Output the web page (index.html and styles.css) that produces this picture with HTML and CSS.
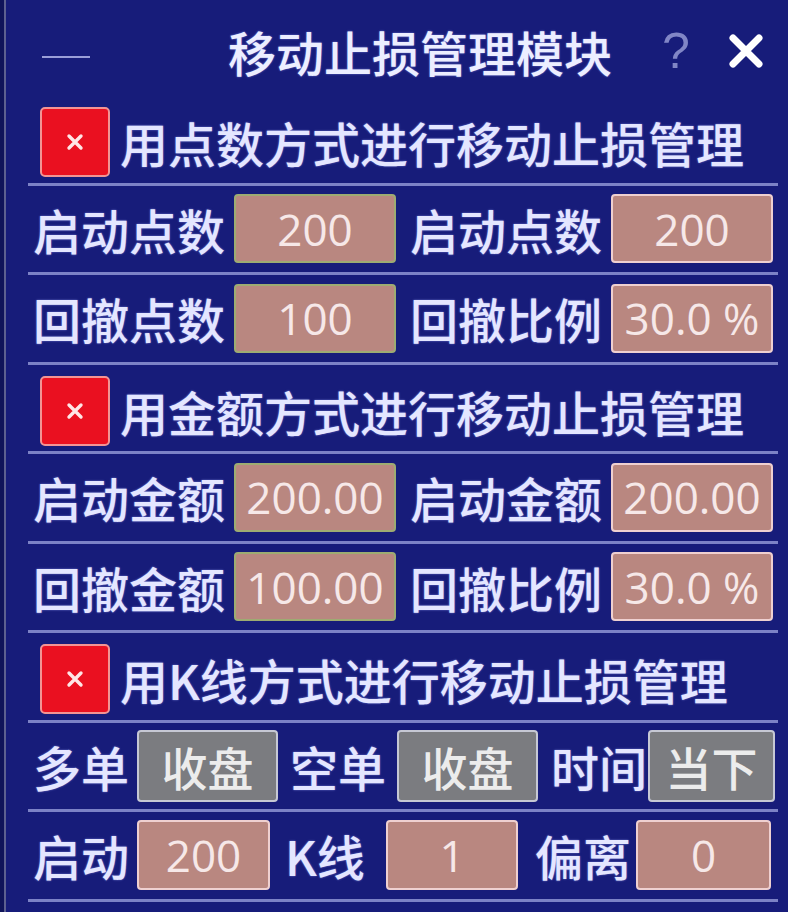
FILE: index.html
```html
<!DOCTYPE html>
<html lang="zh-CN">
<head>
<meta charset="utf-8">
<title>移动止损管理模块</title>
<link rel="stylesheet" href="styles.css">
</head>
<body>
<div class="panel">
  <div class="titlebar">
    <span class="min"></span>
    <span class="title">移动止损管理模块</span>
    <span class="help">?</span>
    <span class="close"><svg width="38" height="36" viewBox="0 0 38 36"><path d="M6 5 L32 31 M32 5 L6 31" stroke="#ffffff" stroke-width="7" stroke-linecap="round" fill="none"/></svg></span>
  </div>
  <div class="rows">
    <div class="row head">
      <span class="check"><svg width="18" height="18" viewBox="0 0 18 18"><path d="M3 3 L15 15 M15 3 L3 15" stroke="#ffe6e6" stroke-width="3.4" stroke-linecap="round"/></svg></span>
      <span class="htext">用点数方式进行移动止损管理</span>
    </div>
    <div class="row quad">
      <span class="lbl w1">启动点数</span><span class="inp green">200</span>
      <span class="lbl w2">启动点数</span><span class="inp pink">200</span>
    </div>
    <div class="row quad">
      <span class="lbl w1">回撤点数</span><span class="inp green">100</span>
      <span class="lbl w2">回撤比例</span><span class="inp pink">30.0 %</span>
    </div>
    <div class="row head">
      <span class="check"><svg width="18" height="18" viewBox="0 0 18 18"><path d="M3 3 L15 15 M15 3 L3 15" stroke="#ffe6e6" stroke-width="3.4" stroke-linecap="round"/></svg></span>
      <span class="htext">用金额方式进行移动止损管理</span>
    </div>
    <div class="row quad">
      <span class="lbl w1">启动金额</span><span class="inp green">200.00</span>
      <span class="lbl w2">启动金额</span><span class="inp pink">200.00</span>
    </div>
    <div class="row quad">
      <span class="lbl w1">回撤金额</span><span class="inp green">100.00</span>
      <span class="lbl w2">回撤比例</span><span class="inp pink">30.0 %</span>
    </div>
    <div class="row head">
      <span class="check"><svg width="18" height="18" viewBox="0 0 18 18"><path d="M3 3 L15 15 M15 3 L3 15" stroke="#ffe6e6" stroke-width="3.4" stroke-linecap="round"/></svg></span>
      <span class="htext">用K线方式进行移动止损管理</span>
    </div>
    <div class="row krow">
      <span class="lbl k1">多单</span><span class="btn b1">收盘</span>
      <span class="lbl k2">空单</span><span class="btn b2">收盘</span>
      <span class="lbl k3">时间</span><span class="btn b3">当下</span>
    </div>
    <div class="row lrow">
      <span class="lbl m1">启动</span><span class="inp pink n1">200</span>
      <span class="lbl m2">K线</span><span class="inp pink n2">1</span>
      <span class="lbl m3">偏离</span><span class="inp pink n3">0</span>
    </div>
  </div>
</div>
</body>
</html>
```

FILE: styles.css
```css
html, body {
  margin: 0;
  padding: 0;
  height: 100%;
}
body {
  background: linear-gradient(to right, #10145a 0 4px, #5d6090 4px 6px, #171c7a 6px);
  font-family: "Noto Sans CJK SC", "Noto Sans", sans-serif;
  color: #e4e6ff;
  overflow: hidden;
}
.panel {
  width: 788px;
  height: 912px;
}
.titlebar {
  box-sizing: border-box;
  height: 96px;
  padding: 6px 0 0 42px;
  display: flex;
  align-items: center;
}
.min {
  width: 48px;
  height: 2px;
  background: #9a9ed8;
  margin-top: 12px;
}
.title {
  margin-left: 138px;
  font-size: 48px;
  font-weight: 500;
  line-height: 1;
  white-space: nowrap;
  color: #eceeff;
  text-shadow: 0 0 2px rgba(160, 170, 255, 0.7);
}
.help {
  margin-left: 50px;
  font-family: "Liberation Sans", sans-serif;
  font-size: 50px;
  line-height: 1;
  color: #8186c6;
}
.close {
  margin-left: 37px;
  display: flex;
}
.rows {
  margin-left: 28px;
  width: 750px;
}
.row {
  box-sizing: border-box;
  height: 89.5px;
  border-bottom: 3px solid #7c82c6;
  display: flex;
  align-items: center;
  padding-left: 5px;
}
.head {
  padding-left: 12px;
  padding-top: 6px;
}
.check {
  box-sizing: border-box;
  width: 70px;
  height: 70px;
  background: #ea1020;
  border: 2px solid #f29494;
  border-radius: 5px;
  display: flex;
  align-items: center;
  justify-content: center;
}
.htext {
  margin-left: 10px;
  font-size: 48px;
  font-weight: 500;
  line-height: 1;
  white-space: nowrap;
  text-shadow: 0 0 2px rgba(160, 170, 255, 0.7);
}
.lbl {
  font-size: 48px;
  font-weight: 500;
  line-height: 1;
  white-space: nowrap;
  text-shadow: 0 0 2px rgba(160, 170, 255, 0.7);
}
.w1 { width: 201px; }
.w2 { width: 201px; margin-left: 14px; }
.inp {
  box-sizing: border-box;
  width: 162px;
  height: 69px;
  background: #b98780;
  border-radius: 4px;
  display: flex;
  align-items: center;
  justify-content: center;
  font-family: "Open Sans", "Liberation Sans", sans-serif;
  font-size: 44px;
  font-weight: 500;
  line-height: 1;
  color: #f6e8e8;
  white-space: nowrap;
  overflow: hidden;
}
.green { border: 2px solid #9eab72; }
.pink { border: 2px solid #efd0d0; }
.btn {
  box-sizing: border-box;
  height: 72px;
  background: #7b7c80;
  border: 2px solid #c6c8d4;
  border-radius: 4px;
  display: flex;
  align-items: center;
  justify-content: center;
  font-size: 46px;
  font-weight: 500;
  line-height: 1;
  color: #ececec;
  white-space: nowrap;
}
.k1 { width: 104px; }
.b1 { width: 141px; }
.k2 { width: 107px; margin-left: 12px; }
.b2 { width: 141px; }
.k3 { width: 97px; margin-left: 13px; }
.b3 { width: 127px; }
.m1 { width: 104px; }
.n1 { width: 133px; height: 70px; }
.m2 { width: 101px; margin-left: 15px; }
.n2 { width: 132px; height: 70px; }
.m3 { width: 101px; margin-left: 17px; }
.n3 { width: 135px; height: 70px; }
```
